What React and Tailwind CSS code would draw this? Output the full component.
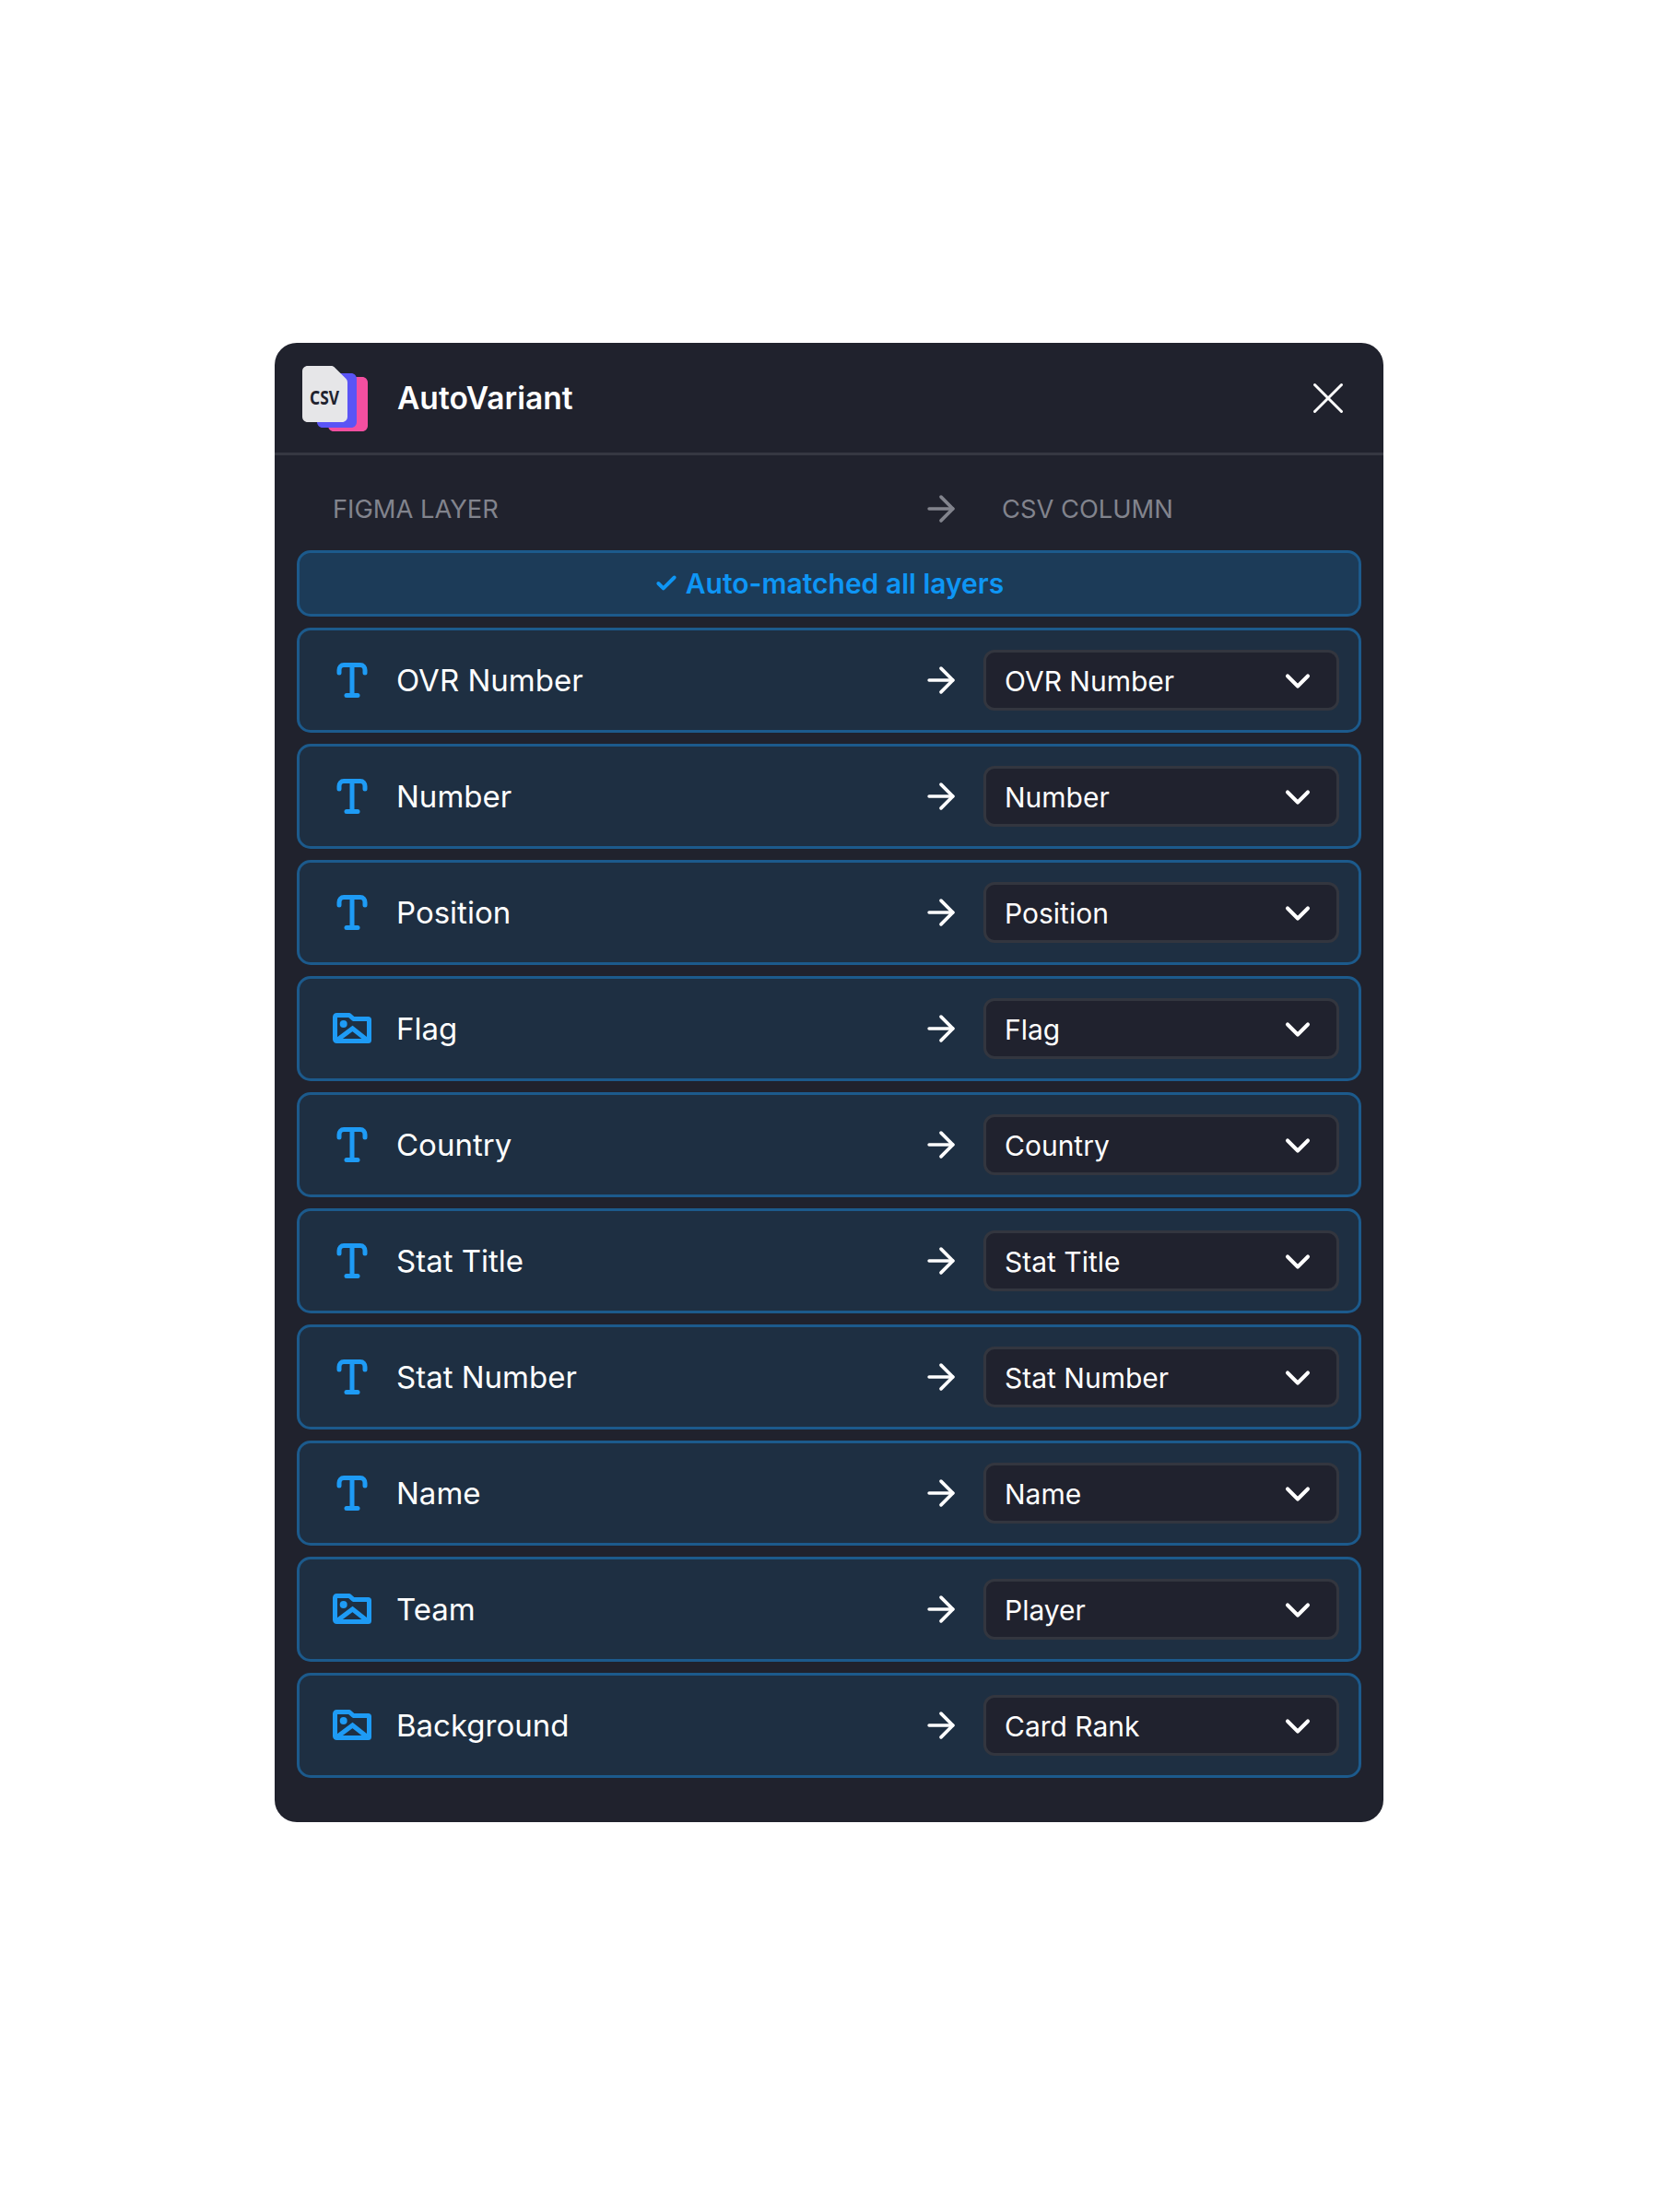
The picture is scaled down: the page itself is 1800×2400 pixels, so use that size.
import React from 'react';
import { ArrowRight, Check, ChevronDown, X } from 'lucide-react';

const rows = [
  { type: 'text', layer: 'OVR Number', column: 'OVR Number' },
  { type: 'text', layer: 'Number', column: 'Number' },
  { type: 'text', layer: 'Position', column: 'Position' },
  { type: 'image', layer: 'Flag', column: 'Flag' },
  { type: 'text', layer: 'Country', column: 'Country' },
  { type: 'text', layer: 'Stat Title', column: 'Stat Title' },
  { type: 'text', layer: 'Stat Number', column: 'Stat Number' },
  { type: 'text', layer: 'Name', column: 'Name' },
  { type: 'image', layer: 'Team', column: 'Player' },
  { type: 'image', layer: 'Background', column: 'Card Rank' },
];

const Logo = () => (
  <svg width="72" height="72" viewBox="0 0 72 72" className="shrink-0">
    <path d="M29 13h37c3.300 0 6 2.700 6 6v47c0 3.300-2.700 6-6 6H35c-3.300 0-6-2.700-6-6z" fill="#f34fa0" />
    <path d="M17 9h37c3.300 0 6 2.700 6 6v47c0 3.300-2.700 6-6 6H23c-3.300 0-6-2.700-6-6z" fill="#5a54f5" />
    <path d="M7 1h25c2 0 3 .6 4.400 2L48 14.500c1.400 1.400 2 2.600 2 4.500V56c0 3.500-2.500 6-6 6H7c-3.500 0-6-2.500-6-6V7c0-3.500 2.500-6 6-6z" fill="#e6e6e8" />
    <text x="25" y="43" textAnchor="middle" fontFamily="'Noto Sans', sans-serif" fontWeight="700" fontSize="22" fill="#20222e" textLength="32" lengthAdjust="spacingAndGlyphs">CSV</text>
  </svg>
);

const TextIcon = () => (
  <svg width="34" height="38" viewBox="0 0 34 38" fill="none" stroke="#1e9bf5" strokeWidth="5" strokeLinecap="round" strokeLinejoin="round">
    <path d="M3 11V8c0-3 2-5.500 5-5.500h18c3 0 5 2.500 5 5.500v3" />
    <path d="M17 3v32" />
    <path d="M11 35.500h12" />
  </svg>
);

const ImageIcon = () => (
  <svg width="42" height="34" viewBox="0 0 42 34" fill="none">
    <path d="M4.500 2.500h13.500l4.500 4h16c.8 0 1 .4 1 1v22c0 .7-.3 1-1 1h-34c-1.300 0-2-.7-2-2v-24c0-1.300.7-2 2-2z" stroke="#1e9bf5" strokeWidth="5" strokeLinejoin="round" />
    <circle cx="11.700" cy="12" r="4" fill="#1e9bf5" />
    <path d="M4 30l17.500-13L38 30" stroke="#1e9bf5" strokeWidth="5" />
  </svg>
);

const MappingRow = ({ type, layer, column }) => (
  <div className="flex h-[114px] items-center rounded-[15px] border-[3px] border-[#1c5a8c] bg-[#1e2f42] pr-[21px]">
    <div className="w-[105px] shrink-0 pl-[36px]">
      <div className="flex w-[42px] justify-center">
        {type === 'text' ? <TextIcon /> : <ImageIcon />}
      </div>
    </div>
    <span className="flex-1 text-[33px] leading-none text-white">{layer}</span>
    <ArrowRight size={44} strokeWidth={2} className="mr-[24px] shrink-0 text-white" />
    <div className="flex h-[66px] w-[386px] shrink-0 items-center justify-between rounded-[12px] border-[3px] border-[#33363f] bg-[#20222e] pl-[20px] pr-[20px]">
      <span className="mt-[1px] text-[30px] leading-none text-white">{column}</span>
      <ChevronDown size={44} strokeWidth={2.2} className="mt-[2px] text-white" />
    </div>
  </div>
);

export default function App() {
  return (
    <div className="min-h-[2400px] bg-white pt-[372px] pl-[298px] font-['Inter',sans-serif]">
      <div className="w-[1203px] rounded-[24px] bg-[#20222d] pb-[48px]">
        <div className="flex h-[122px] items-center justify-between border-b-[3px] border-[#363842] pl-[29px] pr-[31px]">
          <div className="flex items-center gap-[32px]">
            <Logo />
            <span className="mt-[2px] text-[33.500px] font-semibold leading-none text-white">AutoVariant</span>
          </div>
          <X size={58} strokeWidth={1.25} className="text-white" />
        </div>
        <div className="flex h-[103px] items-center pl-[63px] pt-[12px] text-[27.300px] leading-none text-[#82848d]">
          <span className="mt-[2px] w-[638px]">FIGMA LAYER</span>
          <ArrowRight size={44} strokeWidth={2} />
          <span className="ml-[44px] mt-[2px]">CSV COLUMN</span>
        </div>
        <div className="flex flex-col gap-[12px] px-[24px]">
          <div className="flex h-[72px] items-center justify-center gap-[8px] rounded-[15px] border-[3px] border-[#1c5a8c] bg-[#1c3b58] text-[30px] font-semibold leading-none text-[#0e96f5]">
            <Check size={26} strokeWidth={3.600} />
            <span>Auto-matched all layers</span>
          </div>
          {rows.map((row) => (
            <MappingRow key={row.layer} {...row} />
          ))}
        </div>
      </div>
    </div>
  );
}
